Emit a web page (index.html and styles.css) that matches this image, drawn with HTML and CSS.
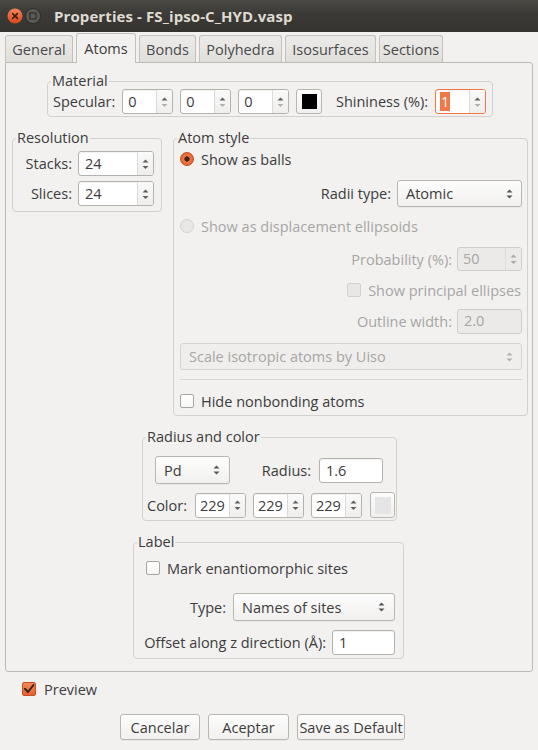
FILE: index.html
```html
<!DOCTYPE html>
<html>
<head>
<meta charset="utf-8">
<link rel="stylesheet" href="styles.css">
</head>
<body>
<div class="window">
  <div class="titlebar">
    <span class="wbtn close"><svg width="16" height="16" viewBox="0 0 16 16"><circle cx="8" cy="8" r="7.5" fill="url(#cg)"/><defs><linearGradient id="cg" x1="0" y1="0" x2="0" y2="1"><stop offset="0" stop-color="#f6865a"/><stop offset="1" stop-color="#d9461b"/></linearGradient></defs><path d="M5.6 5.6 L10.4 10.4 M10.4 5.6 L5.6 10.4" stroke="#3b1e12" stroke-width="1.5" stroke-linecap="round"/></svg></span>
    <span class="wbtn min"><svg width="16" height="16" viewBox="0 0 16 16"><circle cx="8" cy="8" r="7.5" fill="#5b5a55" stroke="#2e2d2a" stroke-width="1"/><rect x="5" y="5" width="6" height="6" fill="none" stroke="#2e2d2a" stroke-width="1.2"/></svg></span>
    <span class="title">Properties - FS_ipso-C_HYD.vasp</span>
  </div>

  <div class="tabs">
    <div class="tab w-general">General</div>
    <div class="tab active w-atoms">Atoms</div>
    <div class="tab w-bonds">Bonds</div>
    <div class="tab w-poly">Polyhedra</div>
    <div class="tab w-iso">Isosurfaces</div>
    <div class="tab w-sect">Sections</div>
  </div>

  <div class="panel">
    <fieldset class="frame material">
      <legend>Material</legend>
      <div class="mat-row">
        <span class="lbl">Specular:</span>
        <div class="spin w51"><span class="val">0</span><span class="btns"><svg width="7" height="14" viewBox="0 0 7 14"><polygon points="0.5,5.5 3.5,2.5 6.5,5.5" fill="#5f5f5f"/><polygon points="0.5,9 3.5,12 6.5,9" fill="#b2b2b2"/></svg></span></div>
        <div class="spin w51 g7"><span class="val">0</span><span class="btns"><svg width="7" height="14" viewBox="0 0 7 14"><polygon points="0.5,5.5 3.5,2.5 6.5,5.5" fill="#5f5f5f"/><polygon points="0.5,9 3.5,12 6.5,9" fill="#b2b2b2"/></svg></span></div>
        <div class="spin w51 g7"><span class="val">0</span><span class="btns"><svg width="7" height="14" viewBox="0 0 7 14"><polygon points="0.5,5.5 3.5,2.5 6.5,5.5" fill="#5f5f5f"/><polygon points="0.5,9 3.5,12 6.5,9" fill="#b2b2b2"/></svg></span></div>
        <div class="colorbtn g7"><span class="swatch black"></span></div>
        <span class="lbl shin">Shininess (%):</span>
        <div class="spin w51 focused"><span class="val"><span class="sel">1</span></span><span class="btns"><svg width="7" height="14" viewBox="0 0 7 14"><polygon points="0.5,5.5 3.5,2.5 6.5,5.5" fill="#5f5f5f"/><polygon points="0.5,9 3.5,12 6.5,9" fill="#b2b2b2"/></svg></span></div>
      </div>
    </fieldset>

    <div class="columns">
      <fieldset class="frame resolution">
        <legend>Resolution</legend>
        <div class="res-grid">
          <span class="lbl r">Stacks:</span>
          <div class="spin"><span class="val">24</span><span class="btns"><svg width="7" height="14" viewBox="0 0 7 14"><polygon points="0.5,5.5 3.5,2.5 6.5,5.5" fill="#5f5f5f"/><polygon points="0.5,9 3.5,12 6.5,9" fill="#5f5f5f"/></svg></span></div>
          <span class="lbl r">Slices:</span>
          <div class="spin"><span class="val">24</span><span class="btns"><svg width="7" height="14" viewBox="0 0 7 14"><polygon points="0.5,5.5 3.5,2.5 6.5,5.5" fill="#5f5f5f"/><polygon points="0.5,9 3.5,12 6.5,9" fill="#5f5f5f"/></svg></span></div>
        </div>
      </fieldset>

      <fieldset class="frame atomstyle">
        <legend>Atom style</legend>
        <div class="as-body">
          <div class="opt r1"><span class="radio checked"></span><span>Show as balls</span></div>
          <div class="rrow r2"><span class="lbl">Radii type:</span>
            <div class="combo w124"><span>Atomic</span><svg width="7" height="12" viewBox="0 0 7 12"><polygon points="0.5,4.5 3.5,1.5 6.5,4.5" fill="#555"/><polygon points="0.5,7.5 3.5,10.5 6.5,7.5" fill="#555"/></svg></div>
          </div>
          <div class="opt r3 dis"><span class="radio disabled"></span><span>Show as displacement ellipsoids</span></div>
          <div class="rrow r4 dis"><span class="lbl">Probability (%):</span>
            <div class="spin w64 disabled h24"><span class="val">50</span><span class="btns"><svg width="7" height="14" viewBox="0 0 7 14"><polygon points="0.5,5.5 3.5,2.5 6.5,5.5" fill="#a9a9a9"/><polygon points="0.5,9 3.5,12 6.5,9" fill="#a9a9a9"/></svg></span></div>
          </div>
          <div class="rrow r5 dis"><span class="check disabled"></span><span class="ctext">Show principal ellipses</span></div>
          <div class="rrow r6 dis"><span class="lbl">Outline width:</span>
            <div class="entry w64 disabled h24">2.0</div>
          </div>
          <div class="combo full disabled r7"><span>Scale isotropic atoms by Uiso</span><svg width="7" height="12" viewBox="0 0 7 12"><polygon points="0.5,4.5 3.5,1.5 6.5,4.5" fill="#b0b0b0"/><polygon points="0.5,7.5 3.5,10.5 6.5,7.5" fill="#b0b0b0"/></svg></div>
          <div class="sep"></div>
          <div class="opt r9"><span class="check"></span><span>Hide nonbonding atoms</span></div>
        </div>
      </fieldset>
    </div>

    <fieldset class="frame radius">
      <legend>Radius and color</legend>
      <div class="rc-row1">
        <div class="combo w74"><span>Pd</span><svg width="7" height="12" viewBox="0 0 7 12"><polygon points="0.5,4.5 3.5,1.5 6.5,4.5" fill="#555"/><polygon points="0.5,7.5 3.5,10.5 6.5,7.5" fill="#555"/></svg></div>
        <div class="rc-right"><span class="lbl">Radius:</span><div class="entry w63">1.6</div></div>
      </div>
      <div class="rc-row2">
        <span class="lbl clr">Color:</span>
        <div class="spin w50"><span class="val">229</span><span class="btns"><svg width="7" height="14" viewBox="0 0 7 14"><polygon points="0.5,5.5 3.5,2.5 6.5,5.5" fill="#5f5f5f"/><polygon points="0.5,9 3.5,12 6.5,9" fill="#5f5f5f"/></svg></span></div>
        <div class="spin w50 g8"><span class="val">229</span><span class="btns"><svg width="7" height="14" viewBox="0 0 7 14"><polygon points="0.5,5.5 3.5,2.5 6.5,5.5" fill="#5f5f5f"/><polygon points="0.5,9 3.5,12 6.5,9" fill="#5f5f5f"/></svg></span></div>
        <div class="spin w50 g8"><span class="val">229</span><span class="btns"><svg width="7" height="14" viewBox="0 0 7 14"><polygon points="0.5,5.5 3.5,2.5 6.5,5.5" fill="#5f5f5f"/><polygon points="0.5,9 3.5,12 6.5,9" fill="#5f5f5f"/></svg></span></div>
        <div class="colorbtn g9 w25"><span class="swatch grey"></span></div>
      </div>
    </fieldset>

    <fieldset class="frame labelf">
      <legend>Label</legend>
      <div class="opt lb1"><span class="check"></span><span>Mark enantiomorphic sites</span></div>
      <div class="rrow lb2"><span class="lbl">Type:</span>
        <div class="combo w161"><span>Names of sites</span><svg width="7" height="12" viewBox="0 0 7 12"><polygon points="0.5,4.5 3.5,1.5 6.5,4.5" fill="#555"/><polygon points="0.5,7.5 3.5,10.5 6.5,7.5" fill="#555"/></svg></div>
      </div>
      <div class="rrow lb3"><span class="lbl">Offset along z direction (Å):</span>
        <div class="entry w62">1</div>
      </div>
    </fieldset>
  </div>

  <div class="preview"><span class="check checked"><svg width="14" height="14" viewBox="0 0 14 14"><path d="M3 6.8 L6 10 L11.5 3" fill="none" stroke="#3a2218" stroke-width="2" stroke-linecap="round" stroke-linejoin="round"/></svg></span><span>Preview</span></div>

  <div class="buttons">
    <div class="button w80">Cancelar</div>
    <div class="button w81">Aceptar</div>
    <div class="button w108">Save as Default</div>
  </div>
</div>
</body>
</html>
```

FILE: styles.css
```css
html, body {
  margin: 0;
  padding: 0;
}
body {
  width: 538px;
  height: 750px;
  overflow: hidden;
  background: #f2f1f0;
  font-family: "Open Sans", "Noto Sans", "DejaVu Sans", sans-serif;
  font-size: 14.5px;
  color: #3c3c3c;
}
.window {
  display: flex;
  flex-direction: column;
  width: 538px;
  height: 750px;
}

/* title bar */
.titlebar {
  height: 32px;
  flex: none;
  display: flex;
  align-items: center;
  background: linear-gradient(#4a4944, #3c3b37 40%, #34332f);
  box-sizing: border-box;
  padding-left: 7px;
}
.wbtn {
  display: flex;
  width: 16px;
  height: 16px;
}
.wbtn.min {
  margin-left: 2px;
}
.title {
  margin-left: 13px;
  font-weight: bold;
  font-size: 15px;
  color: #dfdbd2;
  letter-spacing: 0.1px;
}

/* tabs */
.tabs {
  height: 30px;
  flex: none;
  display: flex;
  align-items: flex-end;
  gap: 3px;
  padding-left: 5px;
  position: relative;
  z-index: 2;
}
.tab {
  height: 27px;
  box-sizing: border-box;
  border: 1px solid #c4c1bc;
  border-bottom: none;
  border-radius: 3px 3px 0 0;
  background: linear-gradient(#ecebe9, #e0dfdc);
  display: flex;
  align-items: center;
  justify-content: center;
  color: #4a4a4a;
  padding-top: 1px;
}
.tab.active {
  height: 30px;
  margin-bottom: -1px;
  background: #f2f1f0;
  color: #3c3c3c;
  padding-bottom: 2px;
}
.w-general { width: 68px; }
.w-atoms { width: 60px; }
.w-bonds { width: 57px; }
.w-poly { width: 83px; }
.w-iso { width: 91px; }
.w-sect { width: 64px; }

/* notebook panel */
.panel {
  flex: none;
  margin: 0 5px;
  width: 528px;
  box-sizing: border-box;
  border: 1px solid #bdbab5;
  border-radius: 0 3px 3px 3px;
  background: #f2f1f0;
  display: flex;
  flex-direction: column;
  align-items: flex-start;
  padding-bottom: 12px;
}

/* frames */
.frame {
  margin: 0;
  padding: 0;
  border: 1px solid #d3d1cd;
  border-radius: 4px;
  min-width: 0;
  box-sizing: border-box;
}
.frame legend {
  padding: 0 1px;
  margin-left: 3px;
  line-height: 16px;
  height: 16px;
  color: #3c3c3c;
}

.lbl { white-space: nowrap; }
.dis { color: #a7a6a3; }

/* spin buttons / entries */
.spin {
  display: flex;
  height: 25px;
  box-sizing: border-box;
  border: 1px solid #b5b2ad;
  border-radius: 3px;
  background: #fff;
  box-shadow: inset 0 1px 1px rgba(0,0,0,0.06);
  flex: none;
}
.spin .val {
  flex: 1;
  padding-left: 5px;
  line-height: 23px;
  overflow: hidden;
}
.spin .btns {
  width: 15px;
  flex: none;
  border-left: 1px solid #dcdad6;
  background: linear-gradient(#fafafa, #efeeec);
  border-radius: 0 2px 2px 0;
  display: flex;
  align-items: center;
  justify-content: center;
}
.spin.focused {
  border-color: #f07746;
}
.spin .sel {
  background: #f07746;
  color: #fff;
  display: inline-block;
  line-height: 19px;
  padding: 0 1px;
  margin-left: -1px;
}
.spin.disabled {
  background: #ebeae8;
  border-color: #d0cecb;
  box-shadow: none;
}
.spin.disabled .btns {
  background: #ebeae8;
  border-left-color: #dedcd8;
}
.h24 { height: 24px; }
.entry {
  height: 25px;
  box-sizing: border-box;
  border: 1px solid #b5b2ad;
  border-radius: 3px;
  background: #fff;
  box-shadow: inset 0 1px 1px rgba(0,0,0,0.06);
  padding-left: 6px;
  line-height: 23px;
  flex: none;
}
.entry.disabled {
  background: #ebeae8;
  border-color: #d0cecb;
  box-shadow: none;
  color: #a7a6a3;
}
.h24.entry, .h24 .val { line-height: 22px; }

.w50 { width: 51px; }
.w51 { width: 51px; }
.w62 { width: 63px; }
.w63 { width: 64px; }
.w64 { width: 65px; }
.w74 { width: 75px; }
.w124 { width: 125px; }
.w161 { width: 162px; }
.g7 { margin-left: 7px; }
.g8 { margin-left: 7px; }
.g9 { margin-left: 8px; }

/* combo / buttons */
.combo, .button {
  height: 28px;
  box-sizing: border-box;
  border: 1px solid #b9b6b0;
  border-radius: 3px;
  background: linear-gradient(#fdfdfd, #f1f0ee);
  box-shadow: 0 1px 0 rgba(0,0,0,0.04);
  display: flex;
  align-items: center;
  flex: none;
}
.combo {
  justify-content: space-between;
  padding: 0 8px 0 8px;
}
.combo.disabled {
  background: #efeeec;
  border-color: #d6d4d0;
  color: #a7a6a3;
  box-shadow: none;
}
.combo.full {
  width: 100%;
  height: 27px;
}
.button {
  height: 26px;
  justify-content: center;
}
.w80 { width: 80px; }
.w81 { width: 81px; }
.w108 { width: 108px; }

.colorbtn {
  width: 26px;
  height: 25px;
  box-sizing: border-box;
  border: 1px solid #b9b6b0;
  border-radius: 3px;
  background: linear-gradient(#fdfdfd, #f0efed);
  display: flex;
  align-items: center;
  justify-content: center;
  flex: none;
}
.colorbtn.w25 { width: 25px; height: 26px; }
.swatch {
  width: 15px;
  height: 15px;
}
.swatch.black { background: #000; }
.swatch.grey { background: #e5e5e5; width: 16px; height: 17px; }

/* radio / check */
.radio, .check {
  width: 14px;
  height: 14px;
  box-sizing: border-box;
  flex: none;
  display: inline-block;
}
.radio {
  border-radius: 50%;
  border: 1px solid #a9a6a1;
  background: #fff;
}
.radio.checked {
  border-color: #c2501f;
  background: radial-gradient(circle, #4a2316 0, #4a2316 2.3px, #ee7a4b 3px, #e86a36 60%, #d9531f 100%);
}
.radio.disabled {
  border-color: #d3d1cd;
  background: #e8e7e5;
}
.check {
  border: 1px solid #a9a6a1;
  border-radius: 2px;
  background: linear-gradient(#fff, #f6f6f5);
}
.check.disabled {
  border-color: #d3d1cd;
  background: #e8e7e5;
}
.check.checked {
  border-color: #c2501f;
  background: linear-gradient(#f28a5e, #e5612e);
  position: relative;
}
.check.checked svg {
  position: absolute;
  left: -1px;
  top: -1px;
}

.opt {
  height: 18px;
  display: flex;
  align-items: center;
  gap: 7px;
}
.rrow {
  display: flex;
  align-items: center;
  justify-content: flex-end;
  align-self: stretch;
}

/* material */
.material {
  margin-top: 10px;
  margin-left: 41px;
  width: 446px;
}
.mat-row {
  display: flex;
  align-items: center;
  padding: 0 6px 2px 5px;
  height: 25px;
}
.mat-row .lbl { margin-right: 7px; }
.mat-row .shin { margin-left: auto; margin-right: 7px; }

/* columns */
.columns {
  display: flex;
  align-items: flex-start;
  margin-top: 13px;
}
.resolution {
  margin-left: 6px;
  width: 150px;
}
.res-grid {
  display: grid;
  grid-template-columns: 1fr 76px;
  column-gap: 6px;
  row-gap: 5px;
  align-items: center;
  padding: 5px 7px 5px 10px;
}
.res-grid .r { text-align: right; }
.res-grid .spin .val { padding-left: 6px; }

.atomstyle {
  margin-left: 11px;
  width: 355px;
}
.as-body {
  display: flex;
  flex-direction: column;
  align-items: flex-start;
  padding: 0 5px 5px 6px;
}
.r1 { margin-top: 4px; }
.r2 { margin-top: 12px; height: 27px; gap: 6px; }
.r2 .combo { height: 27px; }
.r3 { margin-top: 10px; }
.r4 { margin-top: 12px; gap: 5px; height: 24px; }
.r5 { margin-top: 10px; height: 18px; gap: 7px; }
.r5 .ctext { margin-right: 1px; }
.r6 { margin-top: 10px; gap: 5px; height: 24px; }
.r7 { margin-top: 10px; }
.sep {
  margin-top: 9px;
  height: 1px;
  align-self: stretch;
  background: #d9d7d3;
}
.r9 { margin-top: 12px; }

/* radius and color */
.radius {
  margin-top: 13px;
  margin-left: 136px;
  width: 255px;
}
.rc-row1 {
  display: flex;
  align-items: center;
  justify-content: space-between;
  margin-top: 11px;
  padding: 0 13px 0 12px;
}
.rc-row1 .combo { padding-right: 9px; }
.rc-right {
  display: flex;
  align-items: center;
  gap: 8px;
}
.rc-row2 {
  display: flex;
  align-items: center;
  margin-top: 8px;
  padding: 0 1px 2px 4px;
}
.rc-row2 .clr { width: 48px; }
.rc-row2 .spin .val { padding-left: 4px; }

/* label frame */
.labelf {
  margin-top: 13px;
  margin-left: 127px;
  width: 271px;
  display: flex;
  flex-direction: column;
  padding: 0 8px 3px 12px;
}
.labelf legend { margin-left: -9px; }
.lb1 { margin-top: 9px; }
.lb2 { margin-top: 16px; gap: 7px; }
.lb2 .combo { padding-right: 9px; }
.lb3 { margin-top: 9px; gap: 6px; }

/* bottom */
.preview {
  margin-top: 8px;
  margin-left: 22px;
  height: 18px;
  display: flex;
  align-items: center;
  gap: 8px;
}
.buttons {
  display: flex;
  gap: 8px;
  margin-top: 16px;
  margin-left: 120px;
}
```
